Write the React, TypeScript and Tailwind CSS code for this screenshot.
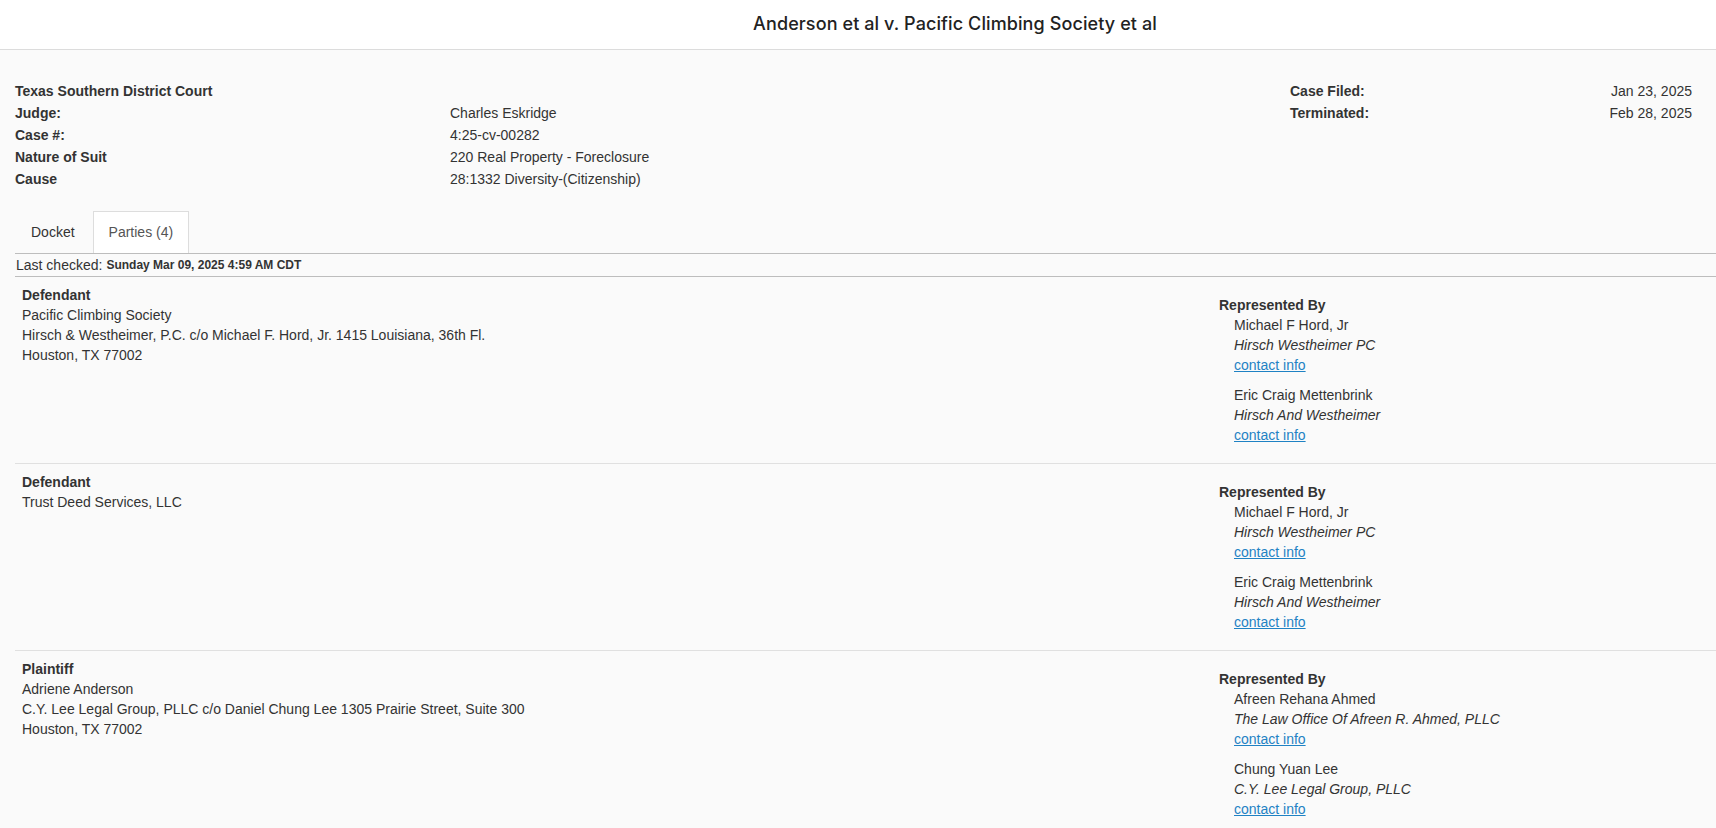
import React from 'react'

interface Attorney {
  name: string
  firm: string
}

interface Party {
  role: string
  lines: string[]
  attorneys: Attorney[]
}

const caseInfo = [
  { label: 'Judge:', value: 'Charles Eskridge' },
  { label: 'Case #:', value: '4:25-cv-00282' },
  { label: 'Nature of Suit', value: '220 Real Property - Foreclosure' },
  { label: 'Cause', value: '28:1332 Diversity-(Citizenship)' },
]

const parties: Party[] = [
  {
    role: 'Defendant',
    lines: [
      'Pacific Climbing Society',
      'Hirsch & Westheimer, P.C. c/o Michael F. Hord, Jr. 1415 Louisiana, 36th Fl.',
      'Houston, TX 77002',
    ],
    attorneys: [
      { name: 'Michael F Hord, Jr', firm: 'Hirsch Westheimer PC' },
      { name: 'Eric Craig Mettenbrink', firm: 'Hirsch And Westheimer' },
    ],
  },
  {
    role: 'Defendant',
    lines: ['Trust Deed Services, LLC'],
    attorneys: [
      { name: 'Michael F Hord, Jr', firm: 'Hirsch Westheimer PC' },
      { name: 'Eric Craig Mettenbrink', firm: 'Hirsch And Westheimer' },
    ],
  },
  {
    role: 'Plaintiff',
    lines: [
      'Adriene Anderson',
      'C.Y. Lee Legal Group, PLLC c/o Daniel Chung Lee 1305 Prairie Street, Suite 300',
      'Houston, TX 77002',
    ],
    attorneys: [
      { name: 'Afreen Rehana Ahmed', firm: 'The Law Office Of Afreen R. Ahmed, PLLC' },
      { name: 'Chung Yuan Lee', firm: 'C.Y. Lee Legal Group, PLLC' },
    ],
  },
]

export default function App() {
  return (
    <div className="min-h-screen bg-[#fafafa] text-[#333] font-['Liberation_Sans',Arial,sans-serif] text-[14px] leading-[20px]">
      {/* Title bar */}
      <header className="h-[50px] bg-white border-b border-[#dcdcdc] flex items-center justify-center pl-[194px] pb-[2px]">
        <h1 className="font-['Inter',sans-serif] text-[18px] font-medium text-[#222] tracking-[0.1px]">
          Anderson et al v. Pacific Climbing Society et al
        </h1>
      </header>

      {/* Case summary */}
      <div className="flex pl-[15px] pr-[24px] pt-[30px] leading-[22px]">
        <div className="w-[1275px] grid grid-cols-[435px_1fr]">
          <div className="col-span-2 font-bold">Texas Southern District Court</div>
          {caseInfo.map((row) => (
            <React.Fragment key={row.label}>
              <div className="font-bold">{row.label}</div>
              <div>{row.value}</div>
            </React.Fragment>
          ))}
        </div>
        <div className="flex-1 grid grid-cols-[1fr_auto] content-start">
          <div className="font-bold">Case Filed:</div>
          <div className="text-right">Jan 23, 2025</div>
          <div className="font-bold">Terminated:</div>
          <div className="text-right">Feb 28, 2025</div>
        </div>
      </div>

      {/* Tabs */}
      <div className="ml-[15px] mt-[21px]">
        <div className="flex border-b border-[#bdbdbd]">
          <div className="px-[15px] py-[10px] border border-transparent mr-[2px] text-[#333]">Docket</div>
          <div className="px-[15px] py-[10px] border border-[#ddd] border-b-0 bg-white text-[#555]">Parties (4)</div>
        </div>
        <div className="h-[23px] flex items-center border-b border-[#bdbdbd] pl-[1px]">
          <span>Last checked:</span>
          <span className="ml-[4px] text-[12px] font-bold">Sunday Mar 09, 2025 4:59 AM CDT</span>
        </div>

        {/* Parties */}
        {parties.map((p, i) => (
          <div key={i} className={`flex pt-[8px] pb-[8px] ${i > 0 ? 'border-t border-[#e0e0e0]' : ''}`}>
            <div className="w-[1204px] pl-[7px]">
              <div className="font-bold">{p.role}</div>
              {p.lines.map((l) => (
                <div key={l}>{l}</div>
              ))}
            </div>
            <div className="flex-1 mt-[10px]">
              <div className="font-bold">Represented By</div>
              {p.attorneys.map((a) => (
                <div key={a.name} className="pl-[15px] mb-[10px]">
                  <div>{a.name}</div>
                  <div className="italic">{a.firm}</div>
                  <a href="#" className="text-[#1f82c4] underline">contact info</a>
                </div>
              ))}
            </div>
          </div>
        ))}
      </div>
    </div>
  )
}
